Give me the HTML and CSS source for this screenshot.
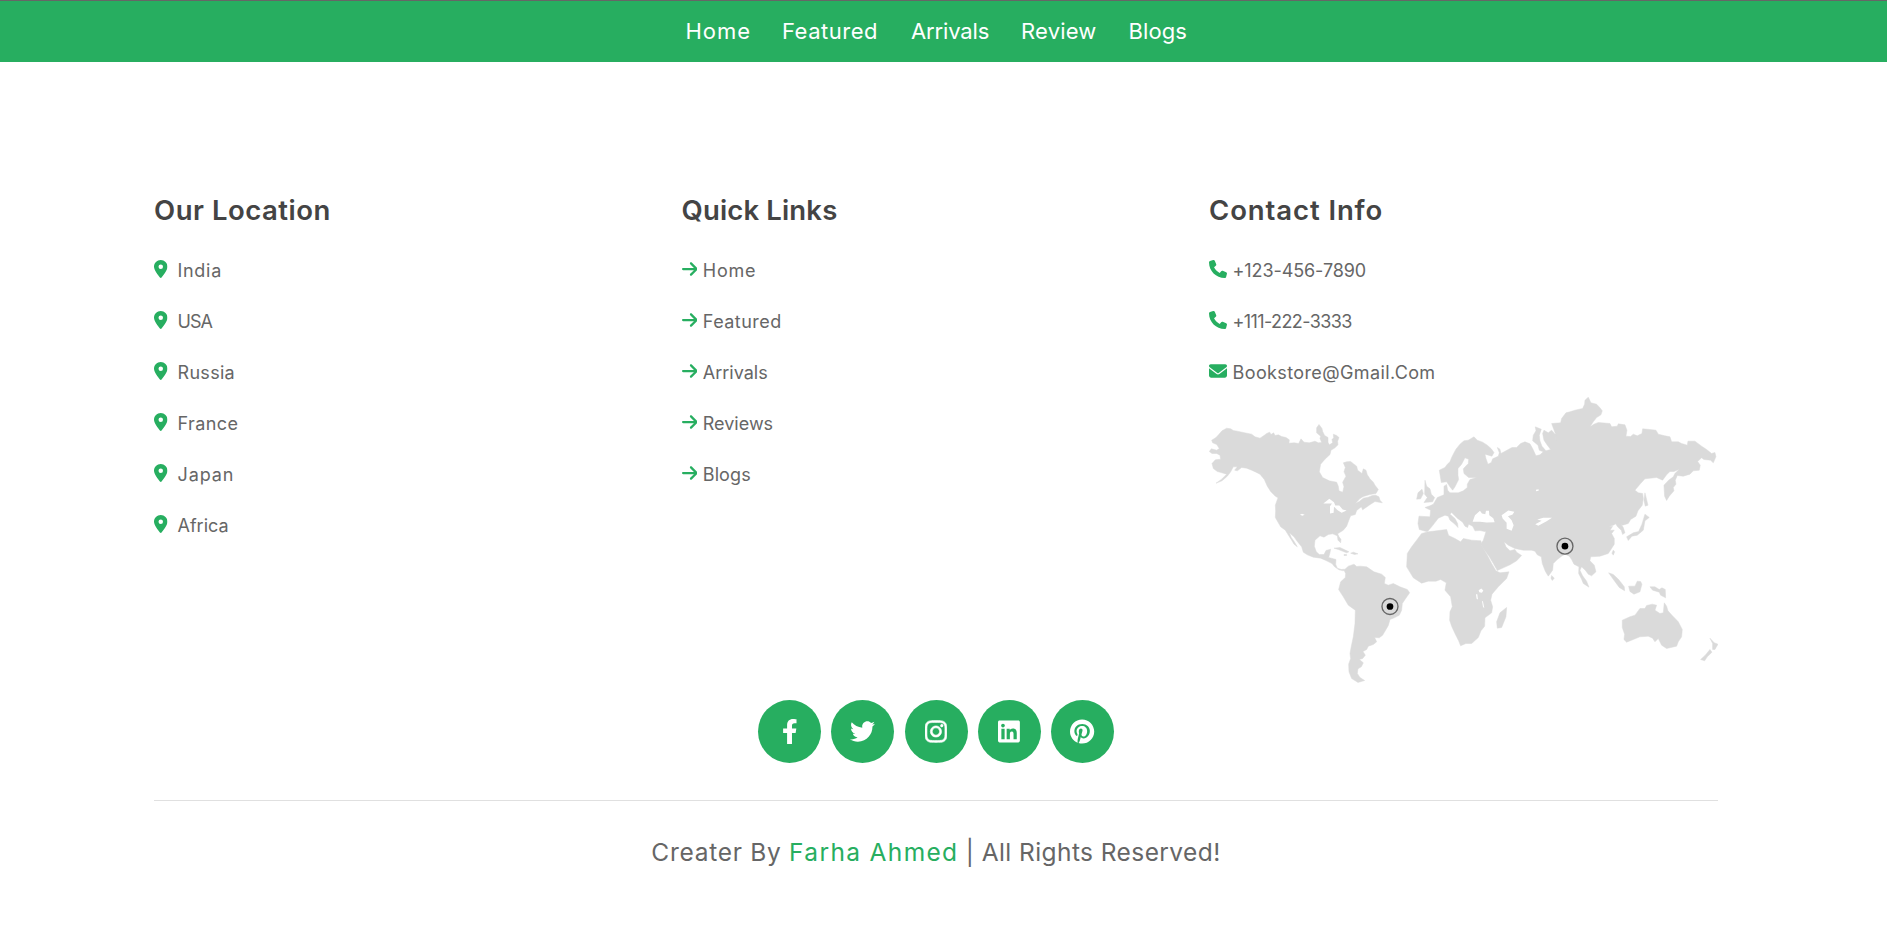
FILE: index.html
```html
<!DOCTYPE html>
<html lang="en">
<head>
<meta charset="utf-8">
<title>Bookstore</title>
<link rel="stylesheet" href="styles.css">
</head>
<body>
<svg class="sprite" aria-hidden="true">
  <symbol id="pin" viewBox="0 0 384 512"><path fill-rule="evenodd" d="M215.7 499.2C267 435 384 279.4 384 192C384 86 298 0 192 0S0 86 0 192c0 87.4 117 243 168.3 307.2c12.3 15.3 35.1 15.3 47.4 0zM192 128a64 64 0 1 0 0 128 64 64 0 1 0 0-128z"/></symbol>
  <symbol id="arrow" viewBox="0 0 448 512"><path d="M438.6 278.6c12.5-12.5 12.5-32.8 0-45.3l-160-160c-12.5-12.5-32.8-12.5-45.3 0s-12.5 32.8 0 45.3L338.8 224 32 224c-17.7 0-32 14.3-32 32s14.3 32 32 32l306.7 0L233.4 393.4c-12.5 12.5-12.5 32.8 0 45.3s32.8 12.5 45.3 0l160-160z"/></symbol>
  <symbol id="phone" viewBox="0 0 512 512"><path d="M164.9 24.6c-7.7-18.6-28-28.5-47.4-23.2l-88 24C12.1 30.2 0 46 0 64C0 311.4 200.6 512 448 512c18 0 33.8-12.1 38.6-29.5l24-88c5.3-19.4-4.6-39.7-23.2-47.4l-96-40c-16.3-6.8-35.2-2.1-46.3 11.6L304.7 368C234.3 334.7 177.3 277.7 144 207.3L193.3 167c13.7-11.2 18.4-30 11.6-46.3l-40-96z"/></symbol>
  <symbol id="mail" viewBox="0 0 512 512"><path d="M48 64C21.5 64 0 85.5 0 112c0 15.1 7.1 29.3 19.2 38.4L236.8 313.6c11.4 8.5 27 8.5 38.4 0L492.8 150.4c12.1-9.1 19.2-23.3 19.2-38.4c0-26.5-21.5-48-48-48H48zM0 176V384c0 35.3 28.7 64 64 64H448c35.3 0 64-28.7 64-64V176L294.4 339.2c-22.8 17.1-54 17.1-76.8 0L0 176z"/></symbol>
</svg>

<nav class="navbar">
  <a class="nav-home" href="#">Home</a>
  <a class="nav-featured" href="#">Featured</a>
  <a class="nav-arrivals" href="#">Arrivals</a>
  <a class="nav-review" href="#">Review</a>
  <a class="nav-blogs" href="#">Blogs</a>
</nav>

<footer class="footer">
  <div class="columns">
    <section class="box places">
      <h3 class="title-location">Our Location</h3>
      <a class="india" href="#"><svg><use href="#pin"/></svg>India</a>
      <a class="usa" href="#"><svg><use href="#pin"/></svg>USA</a>
      <a class="russia" href="#"><svg><use href="#pin"/></svg>Russia</a>
      <a class="france" href="#"><svg><use href="#pin"/></svg>France</a>
      <a class="japan" href="#"><svg><use href="#pin"/></svg>Japan</a>
      <a class="africa" href="#"><svg><use href="#pin"/></svg>Africa</a>
    </section>
    <section class="box links">
      <h3 class="title-links">Quick Links</h3>
      <a class="link-home" href="#"><svg><use href="#arrow"/></svg>Home</a>
      <a class="link-featured" href="#"><svg><use href="#arrow"/></svg>Featured</a>
      <a class="link-arrivals" href="#"><svg><use href="#arrow"/></svg>Arrivals</a>
      <a class="link-reviews" href="#"><svg><use href="#arrow"/></svg>Reviews</a>
      <a class="link-blogs" href="#"><svg><use href="#arrow"/></svg>Blogs</a>
    </section>
    <section class="box contact">
      <h3 class="title-contact">Contact Info</h3>
      <a class="phone-one" href="#"><svg><use href="#phone"/></svg>+123-456-7890</a>
      <a class="phone-two" href="#"><svg><use href="#phone"/></svg>+111-222-3333</a>
      <a class="email" href="#"><svg><use href="#mail"/></svg>Bookstore@Gmail.Com</a>
      <svg class="map" viewBox="27 21 1527 860" role="img" aria-label="World map">
        <!-- Americas -->
        <g class="land">
          <path d="M35 150L48 142 57 132 66 122 80 114 92 116 100 121 112 123 130 127 155 132 165 140 180 144 192 136 200 130 209 126 213 133 221 128 225 136 235 134 245 139 258 142 268 149 267 159 283 158 296 160 303 146 312 156 328 158 345 153 355 158 365 157 360 145 362 138 350 128 350 113 357 103 366 115 368 124 374 136 384 142 384 156 388 164 398 158 396 148 401 143 400 132 410 136 417 142 413 153 414 164 405 173 393 180 390 193 375 207 362 222 358 245 368 262 388 272 410 276 415 288 417 302 428 306 432 290 428 276 438 258 432 245 436 232 430 218 440 215 452 214 462 222 470 228 473 240 486 250 490 236 498 240 502 254 510 266 520 276 525 285 535 298 528 310 510 313 490 319 480 325 466 340 478 334 490 324 505 321 517 316 527 315 537 320 540 330 547 338 525 334 512 342 498 352 488 359 484 350 470 361 466 373 452 377 446 392 440 408 430 420 413 431 417 440 423 447 422 458 414 450 412 437 398 431 385 433 372 441 360 437 345 450 343 468 349 485 358 493 372 493 378 481 392 477 390 488 386 502 408 508 407 522 412 534 424 538 434 537 430 542 417 539 404 530 396 520 378 511 362 504 340 501 322 494 310 486 305 470 292 454 282 440 268 428 274 442 283 455 292 470 282 462 273 447 262 430 256 420 242 410 226 382 227 362 226 345 234 323 226 318 212 304 202 288 193 268 180 252 168 246 155 240 140 234 125 232 112 242 104 240 112 230 100 230 92 245 82 258 66 272 48 279 65 267 80 252 66 248 52 244 40 235 36 220 46 209 62 207 60 195 50 190 36 190 28 184 34 176 50 180 58 175 50 163 38 158Z"/>
          <path d="M402 474L420 472 447 485 440 488 415 478ZM452 489L460 486 474 491 464 493ZM432 493h8v3h-8Z"/>
          <path d="M432 540L445 528 462 522 470 529 480 528 500 530 522 545 545 552 556 562 553 580 565 585 580 580 600 590 622 598 629 608 615 628 607 640 605 660 598 675 583 683 570 688 565 706 548 735 538 743 524 742 530 755 520 763 505 768 500 778 489 784 496 795 488 805 478 808 490 818 484 830 474 836 472 850 480 862 494 871 474 877 455 865 447 845 446 822 452 805 450 790 454 768 460 740 465 700 466 660 445 645 430 620 416 598 422 575 436 562 437 550Z"/>
          <path class="water" d="M370 340L388 326 402 336 406 346 418 346 428 358 440 361 425 368 413 360 402 350 401 368 390 370 390 348 396 340ZM300 374l6-3 8 3-7 3Z"/>
        </g>
        <!-- Europe, Africa, Asia, Oceania -->
        <g class="land" transform="translate(600 0)">
          <path d="M118 240L135 232 142 222 150 215 155 202 161 190 168 177 180 162 192 152 205 150 222 140 232 150 248 156 262 165 274 176 282 187 276 198 255 192 258 205 264 222 274 217 278 206 295 198 298 188 292 172 300 177 303 190 325 178 336 172 350 172 362 160 375 155 390 161 398 175 408 197 420 194 430 185 418 180 414 165 398 152 400 135 408 122 406 110 424 117 418 135 420 152 426 168 438 182 452 178 440 162 432 150 428 130 432 120 445 128 455 120 468 135 468 151 466 130 455 100 482 98 485 85 498 68 510 65 525 60 548 55 554 42 555 30 565 21 573 38 590 42 600 53 607 62 603 74 590 82 580 95 570 110 582 102 595 97 630 100 635 110 652 108 655 101 675 104 681 120 678 138 692 139 700 132 712 137 726 130 728 116 750 118 768 120 775 132 795 137 810 140 815 155 835 155 845 160 862 165 864 153 885 153 905 168 920 178 935 190 945 187 948 200 940 218 932 210 912 208 905 203 893 214 901 225 898 240 880 242 870 252 850 258 832 256 826 270 828 282 820 292 822 302 808 318 800 331 794 318 792 285 806 270 820 260 825 250 838 237 822 244 810 244 800 254 788 270 770 262 750 264 735 266 722 280 705 300 715 308 728 310 730 325 727 345 714 362 708 378 692 388 685 400 668 405 664 403 670 412 675 428 668 433 664 420 653 410 647 401 640 405 628 408 638 409 630 420 643 420 635 430 643 445 643 462 633 478 625 490 600 498 572 500 570 512 583 525 588 545 575 557 565 552 556 540 545 530 540 540 548 557 560 573 567 591 550 580 545 567 536 550 537 530 522 522 515 508 508 498 495 492 485 498 472 508 460 520 458 540 445 558 436 543 427 520 424 500 412 494 405 483 395 480 370 480 345 475 325 465 312 455 318 470 330 482 345 478 350 486 365 496 350 512 330 524 310 533 292 541 280 520 268 500 250 475 242 462 250 450 258 425 240 421 225 422 218 408 206 402 203 412 195 408 188 396 172 384 155 367 150 372 165 385 173 400 174 412 165 402 150 390 145 378 135 375 115 384 105 397 95 410 82 425 58 418 54 400 57 378 90 380 92 360 75 352 90 347 100 342 112 322 132 314 132 288 140 283 143 300 150 308 175 308 190 302 202 292 202 282 210 268 230 262 206 262 192 250 190 236 205 220 206 207 195 203 185 222 174 235 174 255 176 268 165 290 158 300 150 290 140 275 124 277Z"/>
          <path d="M65 430L85 425 140 418 146 436 165 445 182 455 190 445 215 450 243 452 245 465 262 495 275 520 288 542 300 548 327 545 320 565 295 590 276 612 272 630 278 650 275 668 255 683 254 708 243 722 235 742 215 760 198 760 182 767 176 752 165 730 155 708 149 690 150 665 157 650 152 620 135 600 139 578 122 568 108 573 85 573 65 579 40 563 20 530 22 490 35 470 50 450Z"/>
          <path d="M320 652L318 680 305 712 292 714 290 695 300 668ZM75 270L80 288 90 296 94 312 104 322 98 335 72 337 82 322 74 312ZM50 327L54 308 66 297 70 310 62 326ZM735 308L740 328 744 345 736 348 732 330ZM735 372L748 382 735 392 730 420 712 435 696 438 685 451 680 440 700 428 716 424 726 402ZM640 480l4 5-4 10-4-6ZM455 556l8 8-6 7-4-7Z"/>
          <path d="M626 548L640 553 656 568 673 590 674 602 658 592 642 570ZM686 588L705 588 712 573 722 574 726 582 720 605 702 612 690 604ZM750 590L765 590 778 598 786 593 796 598 797 623 782 615 778 606 758 600Z"/>
          <path d="M667 690L690 680 705 675 720 655 735 655 740 646 757 642 770 645 765 660 780 670 790 668 793 638 800 648 804 662 816 675 835 695 847 718 845 740 835 755 830 768 800 775 785 765 775 745 765 755 758 744 745 738 720 740 700 748 680 756 672 748 674 732 667 712Z"/>
          <path d="M930 744L943 758 954 762 945 778 938 778 938 760ZM930 778L936 786 922 800 914 812 902 808 916 795Z"/>
          <path class="water" d="M218 395L225 375 240 362 246 370 256 372 258 362 267 362 268 375 280 384 284 396 260 397 240 395ZM305 375L325 361 343 365 338 373 324 378 335 390 341 405 335 422 320 416 320 398 308 385ZM412 388L430 383 456 383 440 393 415 407 406 402 425 392ZM236 600l8-5 6 6-4 7-8-2ZM228 612l4 0 2 16-4-2ZM246 632l3 2 4 20-4-4ZM408 299l8-2 0 5-8 1Z"/>
        </g>
        <g class="marker"><circle cx="570" cy="649" r="24"/><circle class="dot" cx="570" cy="649" r="10"/></g>
        <g class="marker"><circle cx="1095" cy="468" r="24"/><circle class="dot" cx="1095" cy="468" r="10"/></g>
      </svg>
    </section>
  </div>

  <div class="social">
    <a href="#" aria-label="Facebook"><svg viewBox="0 0 320 512"><path d="M279.14 288l14.22-92.66h-88.91v-60.13c0-25.35 12.42-50.06 52.24-50.06h40.42V6.26S260.43 0 225.36 0c-73.22 0-121.08 44.38-121.08 124.72v70.62H22.89V288h81.39v224h100.17V288z"/></svg></a>
    <a href="#" aria-label="Twitter"><svg viewBox="0 0 512 512"><path d="M459.37 151.716c.325 4.548.325 9.097.325 13.645 0 138.72-105.583 298.558-298.558 298.558-59.452 0-114.68-17.219-161.137-47.106 8.447.974 16.568 1.299 25.34 1.299 49.055 0 94.213-16.568 130.274-44.832-46.132-.975-84.792-31.188-98.112-72.772 6.498.974 12.995 1.624 19.818 1.624 9.421 0 18.843-1.3 27.614-3.573-48.081-9.747-84.143-51.98-84.143-102.985v-1.299c13.969 7.797 30.214 12.67 47.431 13.319-28.264-18.843-46.781-51.005-46.781-87.391 0-19.492 5.197-37.36 14.294-52.954 51.655 63.675 129.3 105.258 216.365 109.807-1.624-7.797-2.599-15.918-2.599-24.04 0-57.828 46.782-104.934 104.934-104.934 30.213 0 57.502 12.67 76.67 33.137 23.715-4.548 46.456-13.32 66.599-25.34-7.798 24.366-24.366 44.833-46.132 57.827 21.117-2.273 41.584-8.122 60.426-16.243-14.292 20.791-32.161 39.308-52.628 54.253z"/></svg></a>
    <a href="#" aria-label="Instagram"><svg class="instagram" viewBox="0 0 448 512"><path d="M224.1 141c-63.6 0-114.9 51.3-114.9 114.9s51.3 114.9 114.9 114.9S339 319.5 339 255.9 287.7 141 224.1 141zm0 189.6c-41.1 0-74.7-33.5-74.7-74.7s33.5-74.7 74.7-74.7 74.7 33.5 74.7 74.7-33.6 74.7-74.7 74.7zm146.4-194.3c0 14.9-12 26.8-26.8 26.8-14.9 0-26.8-12-26.8-26.8s12-26.8 26.8-26.8 26.8 12 26.8 26.8zm76.1 27.2c-1.7-35.9-9.9-67.7-36.2-93.9-26.2-26.2-58-34.4-93.9-36.2-37-2.1-147.9-2.1-184.9 0-35.8 1.7-67.6 9.9-93.9 36.1s-34.4 58-36.2 93.9c-2.1 37-2.1 147.9 0 184.9 1.7 35.9 9.9 67.7 36.2 93.9s58 34.4 93.9 36.2c37 2.1 147.9 2.1 184.9 0 35.9-1.7 67.7-9.9 93.9-36.2 26.2-26.2 34.4-58 36.2-93.9 2.1-37 2.1-147.8 0-184.8zM398.8 388c-7.8 19.6-22.9 34.7-42.6 42.6-29.5 11.7-99.5 9-132.1 9s-102.7 2.6-132.1-9c-19.6-7.8-34.7-22.9-42.6-42.6-11.7-29.5-9-99.5-9-132.1s-2.6-102.7 9-132.1c7.8-19.6 22.9-34.7 42.6-42.6 29.5-11.7 99.5-9 132.1-9s102.7-2.6 132.1 9c19.6 7.8 34.7 22.9 42.6 42.6 11.7 29.5 9 99.5 9 132.1s2.7 102.7-9 132.1z"/></svg></a>
    <a href="#" aria-label="LinkedIn"><svg viewBox="0 0 448 512"><path d="M416 32H31.9C14.3 32 0 46.5 0 64.3v383.4C0 465.5 14.3 480 31.9 480H416c17.6 0 32-14.5 32-32.3V64.3c0-17.8-14.4-32.3-32-32.3zM135.4 416H69V202.2h66.5V416zm-33.2-243c-21.3 0-38.5-17.3-38.5-38.5S80.9 96 102.2 96c21.2 0 38.5 17.3 38.5 38.5 0 21.3-17.2 38.5-38.5 38.5zm282.1 243h-66.4V312c0-24.8-.5-56.7-34.5-56.7-34.6 0-39.9 27-39.9 54.9V416h-66.4V202.2h63.7v29.2h.9c8.9-16.8 30.6-34.5 62.9-34.5 67.2 0 79.7 44.3 79.7 101.9V416z"/></svg></a>
    <a href="#" aria-label="Pinterest"><svg viewBox="0 0 496 512"><path d="M496 256c0 137-111 248-248 248-25.6 0-50.2-3.9-73.4-11.1 10.1-16.5 25.2-43.5 30.8-65 3-11.6 15.4-59 15.4-59 8.1 15.4 31.7 28.5 56.8 28.5 74.8 0 128.7-68.8 128.7-154.3 0-81.9-66.9-143.2-152.9-143.2-107 0-163.9 71.8-163.9 150.1 0 36.4 19.4 81.7 50.3 96.1 4.7 2.2 7.2 1.2 8.3-3.3.8-3.4 5-20.3 6.9-28.1.6-2.5.3-4.7-1.7-7.1-10.1-12.5-18.3-35.3-18.3-56.6 0-54.7 41.4-107.6 112-107.6 60.9 0 103.6 41.5 103.6 100.9 0 67.1-33.9 113.6-78 113.6-24.3 0-42.6-20.1-36.7-44.8 7-29.5 20.5-61.3 20.5-82.6 0-19-10.2-34.9-31.4-34.9-24.9 0-44.9 25.7-44.9 60.2 0 22 7.4 36.8 7.4 36.8s-24.5 103.8-29 123.2c-5 21.4-3 51.6-.9 71.2C65.4 450.9 0 361.1 0 256 0 119 111 8 248 8s248 111 248 248z"/></svg></a>
  </div>

  <p class="credit"><span class="by">Creater By </span><span class="author">Farha Ahmed</span><span class="rights"> | All Rights Reserved!</span></p>
</footer>
</body>
</html>
```

FILE: styles.css
```css
* { box-sizing: border-box; }

body {
  margin: 0;
  font-family: Inter, sans-serif;
  color: #666;
  background: #fff;
}

a { color: inherit; text-decoration: none; }

.sprite { display: none; }

.navbar {
  height: 62px;
  padding: 0 0 1px 685.5px;
  display: flex;
  align-items: center;
  background: #27ae60;
  border-top: 1px solid #666;
  color: #fff;
  font-size: 22px;
}
.nav-home { width: 96.5px; letter-spacing: 1px; }
.nav-featured { width: 129px; letter-spacing: .5px; }
.nav-arrivals { width: 110px; letter-spacing: -.15px; }
.nav-review { width: 107.5px; letter-spacing: .2px; }
.nav-blogs { letter-spacing: .1px; }

.footer {
  width: 1564px;
  margin-left: 154px;
  padding-top: 127px;
}

.columns {
  display: grid;
  grid-template-columns: repeat(3, 1fr);
  gap: 18.6px;
}

.box h3 {
  margin: 0 0 13px;
  padding-top: 1px;
  font-size: 27.5px;
  line-height: 41px;
  font-weight: 600;
  color: #444;
}
.title-location { letter-spacing: .52px; }
.title-links { letter-spacing: .15px; }
.title-contact { letter-spacing: .9px; }

.box a {
  display: flex;
  align-items: center;
  height: 51px;
  padding-top: 1px;
  font-size: 18px;
}
.box a svg {
  height: 18px;
  margin-top: -2px;
  fill: #27ae60;
}
.places a svg { width: 13.5px; margin-right: 10px; }
.links a svg { width: 15.75px; margin-right: 5.5px; }
.contact a svg { width: 18px; margin-right: 5.5px; }

.india { letter-spacing: .7px; }
.usa { letter-spacing: -1px; }
.russia { letter-spacing: .3px; }
.france { letter-spacing: .4px; }
.japan { letter-spacing: .9px; }
.link-home { letter-spacing: .8px; }
.link-featured { letter-spacing: .45px; }
.link-blogs { letter-spacing: .1px; }
.phone-one { letter-spacing: -.1px; }
.phone-two { letter-spacing: -.6px; }
.email { letter-spacing: .38px; }

.map { display: block; width: 100%; height: 287px; }
.land { fill: #dadada; stroke: #dadada; stroke-width: 1.5; stroke-linejoin: round; }
.water { fill: #fff; stroke: none; }
.marker { fill: none; stroke: #666; stroke-width: 4; }
.marker .dot { fill: #000; stroke: none; }

.social {
  display: flex;
  justify-content: center;
  gap: 10.25px;
  padding: 16px 0 37px;
}
.social a {
  width: 63px;
  height: 63px;
  border-radius: 50%;
  background: #27ae60;
  display: flex;
  align-items: center;
  justify-content: center;
}
.social svg { height: 25px; fill: #fff; }
.social .instagram { stroke: #fff; stroke-width: 12; }

.credit {
  margin: 0;
  padding-top: 32px;
  border-top: 1px solid #e0e0e0;
  display: flex;
  justify-content: center;
  font-size: 24.5px;
  line-height: 38px;
}
.credit span { white-space: pre; }
.by { letter-spacing: .72px; }
.author { letter-spacing: 1.35px; color: #27ae60; }
.rights { letter-spacing: .42px; }
```
